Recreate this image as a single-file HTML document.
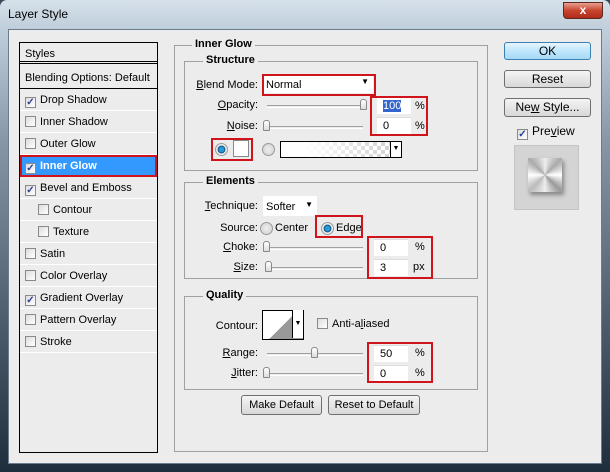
<!DOCTYPE html><html><head><style>
*{margin:0;padding:0;box-sizing:border-box}
body{width:610px;height:472px;overflow:hidden;font-family:"Liberation Sans",sans-serif;font-size:11px;color:#000;background:#3a4a5a;position:relative}
.a{position:absolute}
.frame{left:0;top:0;width:610px;height:472px;background:linear-gradient(#d6e1ea,#c0cfdc 28px,#8797a8 140px,#4a5a6a 330px,#1e2e3c);border-radius:7px 7px 0 0}
.client{left:8px;top:29px;width:594px;height:435px;background:#ececec;border:1px solid #6b7c8c}
.title{left:8px;top:7px;font-size:12px;color:#000}
.close{left:563px;top:2px;width:40px;height:17px;background:linear-gradient(#e8a090,#c8452f 50%,#b02a18);border:1px solid #5a2a20;border-radius:0 0 4px 4px;color:#fff;font-weight:bold;text-align:center;font-size:12px;line-height:15px}
.list{left:19px;top:42px;width:139px;height:411px;border:1px solid #000;background:#ececec}
.row{position:absolute;left:0;width:137px;height:22px;border-bottom:1px solid #fff;line-height:22px;padding-left:5px}
.cb{display:inline-block;width:11px;height:11px;border:1px solid #8a8a8a;background:linear-gradient(135deg,#ddd,#fff);vertical-align:-2px;margin-right:4px;font-size:10px;line-height:9px;text-align:center;color:#2a3f9a;font-weight:bold}
.grp{border:1px solid #a0a0a0}
.leg{position:absolute;background:#ececec;font-weight:bold;padding:0 3px;top:-8px}
.lbl{position:absolute;text-align:right;width:80px}
.trk{position:absolute;height:3px;border-top:1px solid #a0a0a0;border-bottom:1px solid #fff;width:96px}
.th{position:absolute;width:7px;height:11px;border:1px solid #888;border-radius:3px 3px 1px 1px;background:linear-gradient(#fff,#ddd)}
.inp{position:absolute;width:34px;height:17px;background:#fff;border-top:1px solid #ddd;padding:2px 0 0 6px}
.red{position:absolute;border:2px solid #d0141c}
.btn{position:absolute;border:1px solid #707070;border-radius:3px;background:linear-gradient(#f4f4f4,#e6e6e6 50%,#d8d8d8);text-align:center;font-size:12px}
.rad{position:absolute;width:13px;height:13px;border-radius:50%;border:1px solid #999;background:radial-gradient(#eee,#d0d0d0)}
.rad.on{background:radial-gradient(#2a9ad8 30%,#0a4a7a 45%,#eee 55%)}
u{text-decoration:underline}
</style></head><body>
<div class="a frame"></div>
<div class="a title">Layer Style</div>
<div class="a close">x</div>
<div class="a client"></div>

<div class="a list">
 <div class="row" style="top:0;height:21px;border-bottom:3px double #000">Styles</div>
 <div class="row" style="top:24px;border-bottom:1px solid #000">Blending Options: Default</div>
 <div class="row" style="top:46px"><span class="cb">✓</span>Drop Shadow</div>
 <div class="row" style="top:68px"><span class="cb"></span>Inner Shadow</div>
 <div class="row" style="top:90px"><span class="cb"></span>Outer Glow</div>
 <div class="row" style="top:112px;background:#3399ff;color:#fff;font-weight:bold;border:2px solid #d0141c;padding-left:3px;line-height:18px"><span class="cb" style="color:#2a3f9a">✓</span>Inner Glow</div>
 <div class="row" style="top:134px"><span class="cb">✓</span>Bevel and Emboss</div>
 <div class="row" style="top:156px;padding-left:18px"><span class="cb"></span>Contour</div>
 <div class="row" style="top:178px;padding-left:18px"><span class="cb"></span>Texture</div>
 <div class="row" style="top:200px"><span class="cb"></span>Satin</div>
 <div class="row" style="top:222px"><span class="cb"></span>Color Overlay</div>
 <div class="row" style="top:244px"><span class="cb">✓</span>Gradient Overlay</div>
 <div class="row" style="top:266px"><span class="cb"></span>Pattern Overlay</div>
 <div class="row" style="top:288px"><span class="cb"></span>Stroke</div>
</div>

<div class="a grp" style="left:174px;top:45px;width:314px;height:407px"><span class="leg" style="left:17px">Inner Glow</span></div>
<div class="a grp" style="left:184px;top:61px;width:294px;height:110px"><span class="leg" style="left:18px">Structure</span></div>
<div class="a grp" style="left:184px;top:182px;width:294px;height:97px"><span class="leg" style="left:18px">Elements</span></div>
<div class="a grp" style="left:184px;top:296px;width:294px;height:94px"><span class="leg" style="left:18px">Quality</span></div>

<!-- Structure -->
<div class="lbl" style="left:178px;top:79px"><u>B</u>lend Mode:</div>
<div class="a" style="left:264px;top:76px;width:109px;height:17px;background:#fff;padding:3px 2px;">Normal<span style="position:absolute;right:4px;top:1px;font-size:8px">▼</span></div>
<div class="red" style="left:262px;top:74px;width:114px;height:22px"></div>
<div class="lbl" style="left:178px;top:99px"><u>O</u>pacity:</div>
<div class="trk" style="left:267px;top:105px"></div><div class="th" style="left:360px;top:99px"></div>
<div class="lbl" style="left:178px;top:120px"><u>N</u>oise:</div>
<div class="trk" style="left:267px;top:126px"></div><div class="th" style="left:263px;top:120px"></div>
<div class="inp" style="left:377px;top:97px"><span style="background:#3366cc;color:#fff">100</span></div><div class="a" style="left:415px;top:100px">%</div>
<div class="inp" style="left:377px;top:117px">0</div><div class="a" style="left:415px;top:120px">%</div>
<div class="red" style="left:370px;top:96px;width:58px;height:40px"></div>
<div class="rad on" style="left:215px;top:143px"></div>
<div class="a" style="left:233px;top:140px;width:16px;height:17px;background:#fff;border:1px solid #888"></div>
<div class="red" style="left:211px;top:138px;width:42px;height:23px"></div>
<div class="rad" style="left:262px;top:143px"></div>
<div class="a" style="left:280px;top:141px;width:122px;height:17px;border:1px solid #000;background:linear-gradient(90deg,#fff 20%,rgba(255,255,255,0)),repeating-conic-gradient(#ccc 0 25%,#fff 0 50%) 0 0/8px 8px"></div>
<div class="a" style="left:390px;top:142px;width:11px;height:15px;background:#fff;border-left:1px solid #000;font-size:7px;text-align:center;line-height:14px">▼</div>

<!-- Elements -->
<div class="lbl" style="left:178px;top:200px"><u>T</u>echnique:</div>
<div class="a" style="left:263px;top:196px;width:54px;height:20px;background:#fff;padding:5px 3px">Softer<span style="position:absolute;right:4px;top:4px;font-size:8px">▼</span></div>
<div class="lbl" style="left:178px;top:222px">Source:</div>
<div class="rad" style="left:260px;top:222px"></div><div class="a" style="left:275px;top:222px">Center</div>
<div class="rad on" style="left:321px;top:222px"></div><div class="a" style="left:336px;top:222px">Edge</div>
<div class="red" style="left:315px;top:215px;width:48px;height:23px"></div>
<div class="lbl" style="left:178px;top:241px"><u>C</u>hoke:</div>
<div class="trk" style="left:267px;top:247px"></div><div class="th" style="left:263px;top:241px"></div>
<div class="lbl" style="left:178px;top:261px"><u>S</u>ize:</div>
<div class="trk" style="left:267px;top:267px"></div><div class="th" style="left:265px;top:261px"></div>
<div class="inp" style="left:374px;top:239px">0</div><div class="a" style="left:415px;top:241px">%</div>
<div class="inp" style="left:374px;top:259px">3</div><div class="a" style="left:413px;top:261px">px</div>
<div class="red" style="left:367px;top:236px;width:66px;height:43px"></div>

<!-- Quality -->
<div class="lbl" style="left:178px;top:320px">Contour:</div>
<div class="a" style="left:262px;top:310px;width:42px;height:30px;border:1px solid #000;background:linear-gradient(135deg,#fff 50%,#999 50%)"></div>
<div class="a" style="left:292px;top:310px;width:11px;height:28px;background:#fff;border-left:1px solid #000;font-size:7px;text-align:center;line-height:28px">▼</div>
<div class="a" style="left:317px;top:318px"><span class="cb"></span>Anti-a<u>l</u>iased</div>
<div class="lbl" style="left:178px;top:347px"><u>R</u>ange:</div>
<div class="trk" style="left:267px;top:353px"></div><div class="th" style="left:311px;top:347px"></div>
<div class="lbl" style="left:178px;top:367px"><u>J</u>itter:</div>
<div class="trk" style="left:267px;top:373px"></div><div class="th" style="left:263px;top:367px"></div>
<div class="inp" style="left:374px;top:345px">50</div><div class="a" style="left:415px;top:347px">%</div>
<div class="inp" style="left:374px;top:365px">0</div><div class="a" style="left:415px;top:367px">%</div>
<div class="red" style="left:367px;top:342px;width:66px;height:41px"></div>

<div class="btn" style="left:241px;top:395px;width:81px;height:20px;line-height:18px;font-size:11px">Make Default</div>
<div class="btn" style="left:328px;top:395px;width:92px;height:20px;line-height:18px;font-size:11px">Reset to Default</div>

<div class="btn" style="left:504px;top:42px;width:87px;height:18px;line-height:16px;border-color:#3c7fb1;background:linear-gradient(#e8f6fd,#bee6fd 50%,#a7d9f5)">OK</div>
<div class="btn" style="left:504px;top:70px;width:87px;height:18px;line-height:16px">Reset</div>
<div class="btn" style="left:504px;top:98px;width:87px;height:19px;line-height:17px">Ne<u>w</u> Style...</div>
<div class="a" style="left:517px;top:124px;font-size:12px"><span class="cb">✓</span>Pre<u>v</u>iew</div>
<div class="a" style="left:514px;top:145px;width:65px;height:65px;background:#d4d4d4;border:1px solid #c4c4c4"></div>
<div class="a" style="left:528px;top:158px;width:34px;height:34px;background:conic-gradient(#eee,#aaa,#fff,#999,#eee,#bbb,#fff,#aaa,#eee);box-shadow:2px 3px 4px #888"></div>
</body></html>
